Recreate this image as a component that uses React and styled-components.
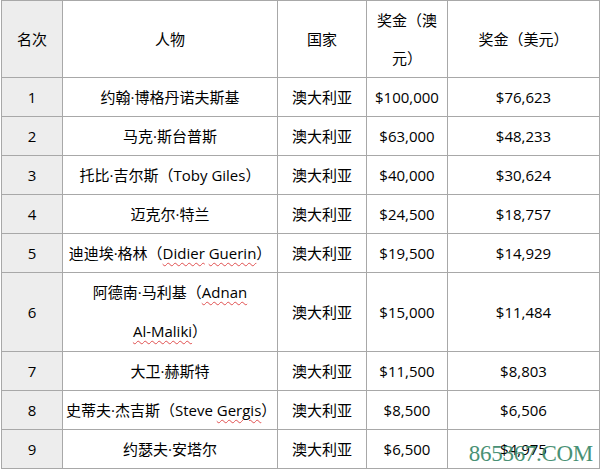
import React from "react";
import styled, { createGlobalStyle } from "styled-components";

const Global = createGlobalStyle`
  html, body { margin: 0; padding: 0; background: #fff; }
  body { font-family: "Noto Sans CJK SC", "Open Sans", sans-serif; }
`;

const Page = styled.div`
  position: relative;
  width: 600px;
  height: 470px;
  overflow: hidden;
  background: #fff;
`;

const Table = styled.table`
  margin-left: 1px;
  border-collapse: collapse;
  table-layout: fixed;
  width: 598px;
  font-family: "Open Sans", "Noto Sans CJK SC", sans-serif;
  font-size: 15px;
  color: #000;
`;

const Cell = styled.td`
  border: 1px solid #a8a8a8;
  text-align: center;
  vertical-align: middle;
  padding: 0 3px;
  line-height: ${(p) => (p.$tall ? "39px" : "38px")};
  height: ${(p) => (p.$tall ? "78px" : "38px")};
  background: ${(p) => (p.$rank ? "#ededed" : "#fff")};
  white-space: nowrap;
`;

const Head = styled(Cell).attrs({ as: "th" })`
  font-weight: normal;
  height: 76px;
`;

const Misspelt = styled.span`
  text-decoration: underline wavy #e05050;
  text-decoration-thickness: 1px;
  text-underline-offset: 3px;
`;

const Watermark = styled.div`
  position: absolute;
  right: 7px;
  bottom: 3px;
  font-family: "Liberation Serif", serif;
  font-size: 23px;
  letter-spacing: -0.3px;
  color: #3f8c6e;
  opacity: 0.95;
`;

const rows = [
  ["1", "约翰·博格丹诺夫斯基", "$100,000", "$76,623"],
  ["2", "马克·斯台普斯", "$63,000", "$48,233"],
  ["3", <>托比·吉尔斯（Toby Giles）</>, "$40,000", "$30,624"],
  ["4", "迈克尔·特兰", "$24,500", "$18,757"],
  ["5", <>迪迪埃·格林（<Misspelt>Didier</Misspelt> <Misspelt>Guerin</Misspelt>）</>, "$19,500", "$14,929"],
  ["6", <>阿德南·马利基（<Misspelt>Adnan</Misspelt><br /><Misspelt>Al-Maliki</Misspelt>）</>, "$15,000", "$11,484", true],
  ["7", "大卫·赫斯特", "$11,500", "$8,803"],
  ["8", <>史蒂夫·杰吉斯（Steve <Misspelt>Gergis</Misspelt>）</>, "$8,500", "$6,506"],
  ["9", "约瑟夫·安塔尔", "$6,500", "$4,975"],
];

export default function App() {
  return (
    <Page>
      <Global />
      <Table>
        <colgroup>
          <col style={{ width: 61 }} />
          <col style={{ width: 215 }} />
          <col style={{ width: 89 }} />
          <col style={{ width: 81 }} />
          <col style={{ width: 152 }} />
        </colgroup>
        <thead>
          <tr>
            <Head $rank>名次</Head>
            <Head>人物</Head>
            <Head>国家</Head>
            <Head>奖金（澳<br />元）</Head>
            <Head>奖金（美元）</Head>
          </tr>
        </thead>
        <tbody>
          {rows.map(([rank, name, aud, usd, tall]) => (
            <tr key={rank}>
              <Cell $rank>{rank}</Cell>
              <Cell $tall={tall}>{name}</Cell>
              <Cell>澳大利亚</Cell>
              <Cell>{aud}</Cell>
              <Cell>{usd}</Cell>
            </tr>
          ))}
        </tbody>
      </Table>
      <Watermark>865367.COM</Watermark>
    </Page>
  );
}
